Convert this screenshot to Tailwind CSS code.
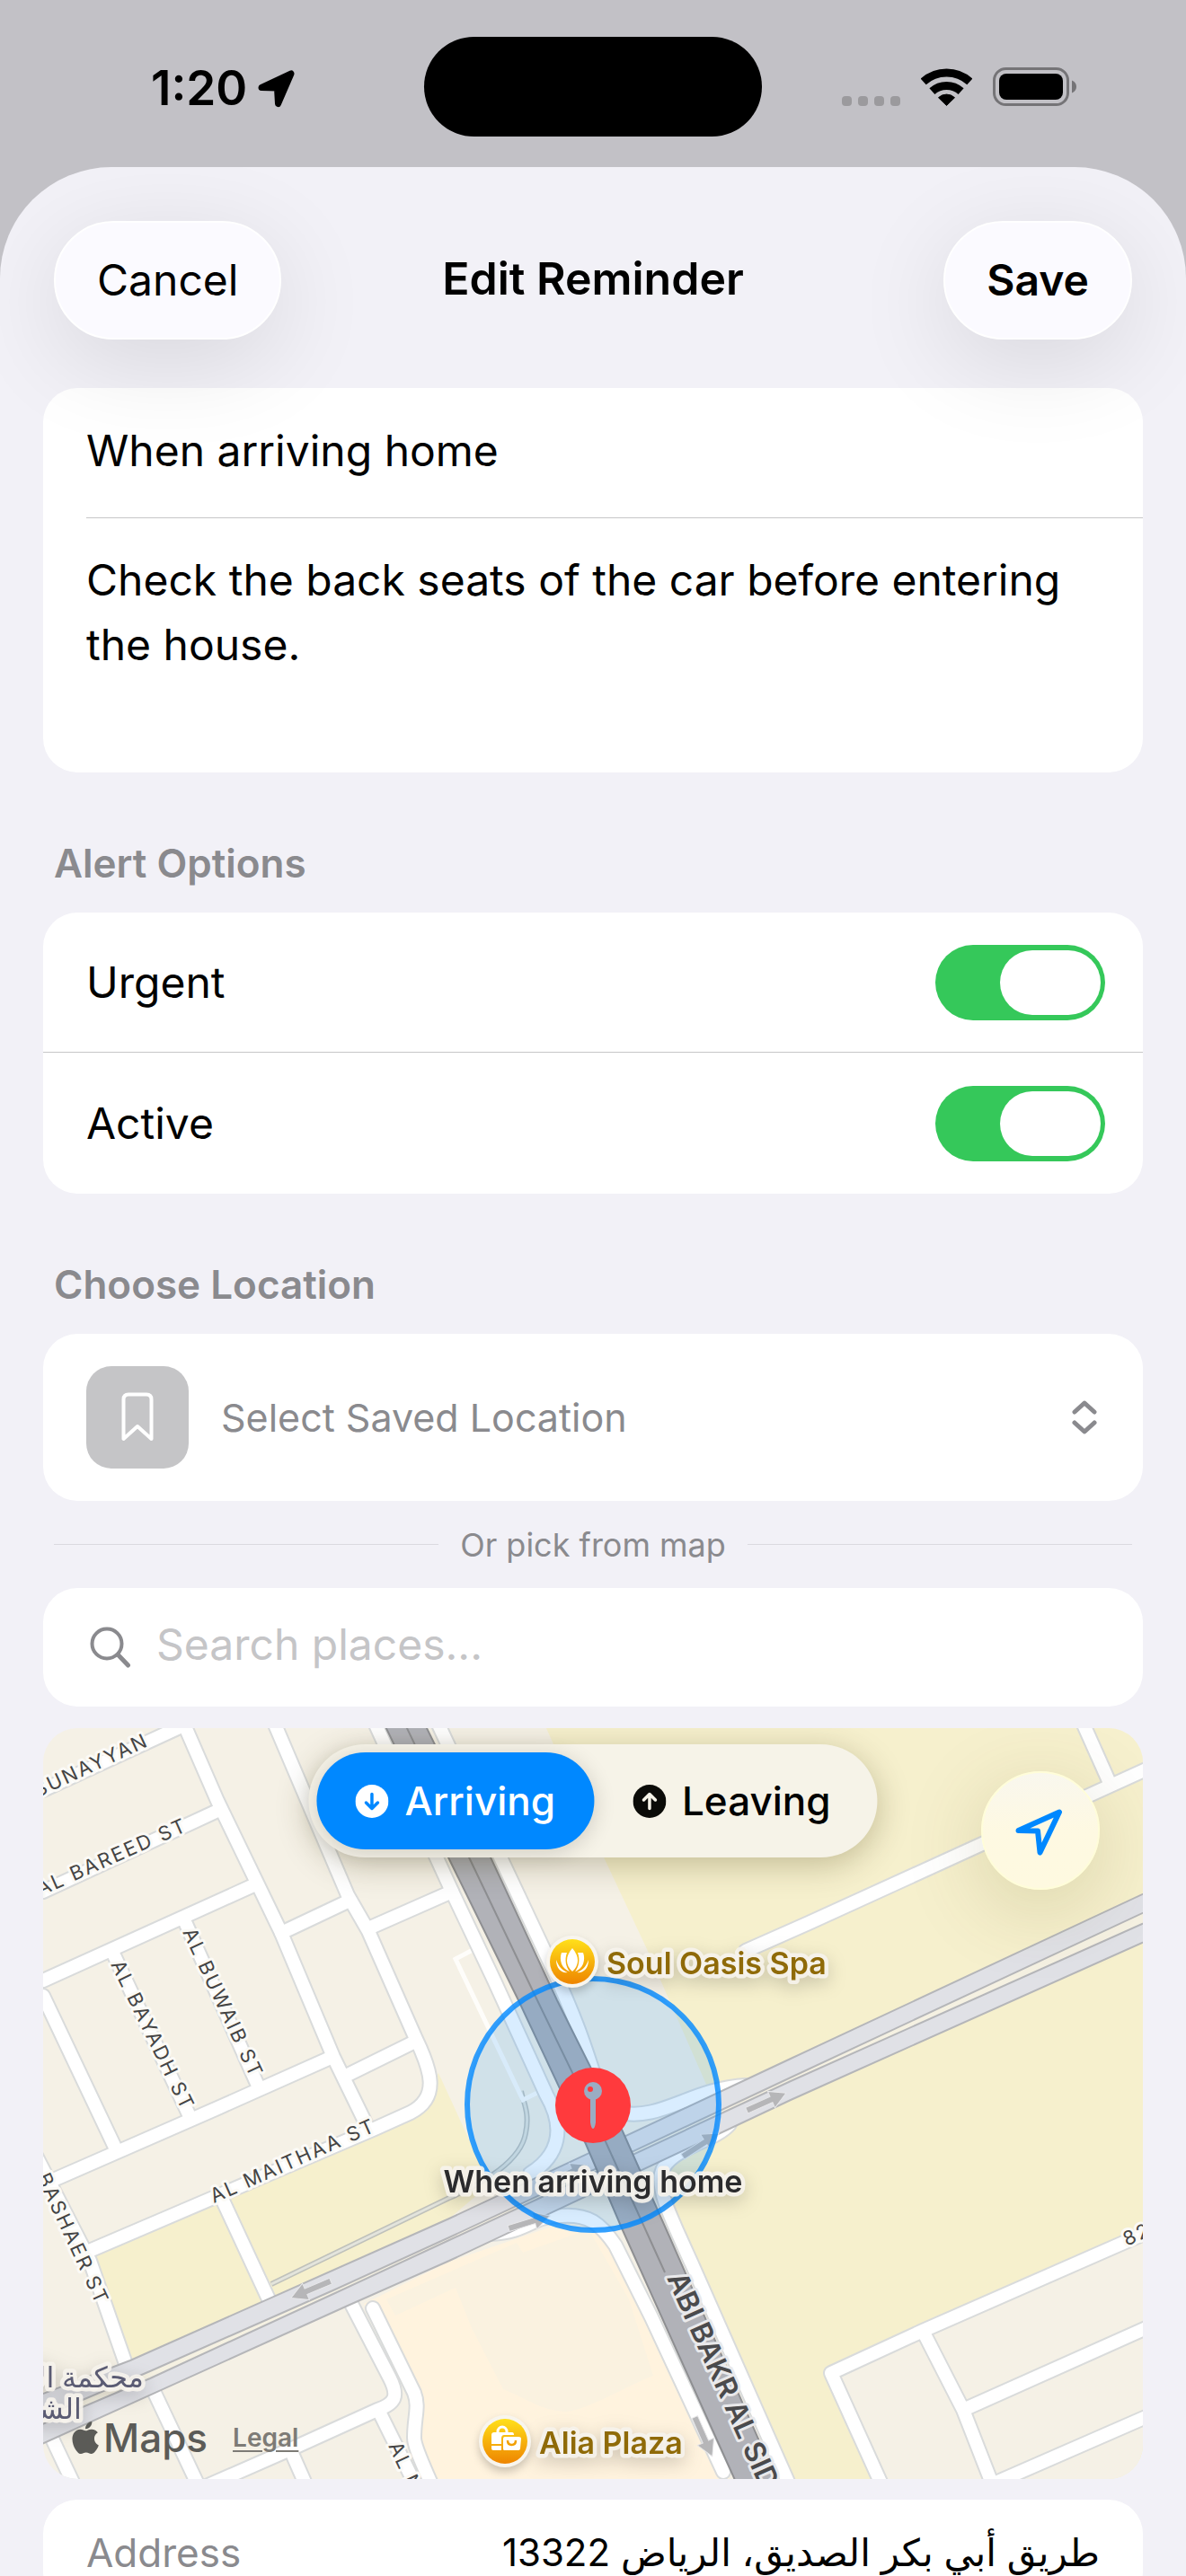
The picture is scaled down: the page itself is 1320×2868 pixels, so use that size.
<!DOCTYPE html>
<html lang="en">
<head>
<meta charset="utf-8">
<meta name="viewport" content="width=device-width, initial-scale=1">
<title>Edit Reminder</title>
<script src="https://cdn.jsdelivr.net/npm/@tailwindcss/browser@4"></script>
</head>
<body class="flex h-screen flex-col overflow-hidden bg-[#c2c1c6] font-[Inter,'DejaVu_Sans',sans-serif] text-[48px] text-black">

<!-- Status bar -->
<header class="grid h-[186px] shrink-0 grid-cols-[1fr_376px_1fr] items-center pt-[41px] pb-[34px]">
  <div class="flex items-center gap-3 pt-1 pl-[168px]">
    <span class="text-[53px] leading-none font-semibold">1:20</span>
    <svg class="h-[42px] w-[42px]" viewBox="0 0 42 42" aria-hidden="true"><path d="M4 19.500 L37 4 L22.500 37.500 L21.500 20 Z" fill="#000" stroke="#000" stroke-width="7" stroke-linejoin="round"/></svg>
  </div>
  <div class="h-[111px] rounded-full bg-black"></div>
  <div class="flex items-center justify-end gap-[23px] pr-[122px]">
    <svg class="h-[42px] w-[65px]" viewBox="0 0 65 42" fill="#9b9a9d" aria-hidden="true"><rect y="31" width="11" height="11" rx="4"/><rect x="18" y="31" width="11" height="11" rx="4"/><rect x="36" y="31" width="11" height="11" rx="4"/><rect x="54" y="31" width="11" height="11" rx="4"/></svg>
    <svg class="h-[42px] w-[57px]" viewBox="0 0 57 42" fill="none" stroke="#000" stroke-width="9" aria-hidden="true"><path d="M2.700 14.900A38.500 38.500 0 0 1 54.300 14.900"/><path d="M12.400 25.700A24 24 0 0 1 44.600 25.700"/><path d="M19.500 32.700A13 13 0 0 1 37.500 32.700L28.500 41.500Z" fill="#000" stroke-width="1" stroke-linejoin="round"/></svg>
    <svg class="h-[43px] w-[93px]" viewBox="0 0 93 43" aria-hidden="true"><rect x="1.500" y="1.500" width="82" height="40" rx="13" fill="none" stroke="#757477" stroke-width="3"/><rect x="7" y="7" width="71" height="29" rx="8"/><path d="M88 14.500C91.500 16 93 18.500 93 21.500S91.500 27 88 28.500Z" fill="#757477"/></svg>
  </div>
</header>

<!-- Sheet -->
<div class="relative flex min-h-0 flex-1 flex-col overflow-hidden rounded-t-[124px] bg-[#f2f1f7]">
  <div class="relative z-10 grid shrink-0 grid-cols-[1fr_auto_1fr] items-center px-[60px] pt-[60px] pb-[54px]">
    <button type="button" class="h-[132px] justify-self-start rounded-full border-2 border-white bg-[#fbfaff] px-[46px] leading-none shadow-[0_24px_110px_rgba(0,0,0,0.11)]">Cancel</button>
    <h1 class="pb-1 text-[50px] leading-none font-semibold">Edit Reminder</h1>
    <button type="button" class="h-[132px] justify-self-end rounded-full border-2 border-white bg-[#fbfaff] px-[46px] leading-none font-semibold shadow-[0_24px_110px_rgba(0,0,0,0.11)]">Save</button>
  </div>

  <main class="min-h-0 flex-1 overflow-y-auto px-12 [scrollbar-width:none]">
    <div class="overflow-hidden rounded-[38px] bg-white">
      <input type="text" aria-label="Title" value="When arriving home" class="block h-36 w-full px-12 pb-1.5 outline-none">
      <div class="ml-12 h-px bg-[#c6c6c8]"></div>
      <textarea aria-label="Notes" rows="3" class="block h-[283px] w-full resize-none overflow-hidden py-[33px] pr-10 pl-12 leading-[72px] outline-none">Check the back seats of the car before entering the house.</textarea>
    </div>

    <h2 class="mt-[74px] mb-7 px-3 text-[44px] leading-[54px] font-semibold text-[#8a8a8e]">Alert Options</h2>
    <div class="divide-y divide-[#c6c6c8] rounded-[38px] bg-white">
      <label class="flex h-[156px] items-center justify-between pr-[42px] pl-12">
        <span>Urgent</span>
        <input type="checkbox" role="switch" checked class="relative h-[84px] w-[189px] appearance-none rounded-full bg-[#c6c6c8] before:absolute before:top-1.5 before:left-1.5 before:h-[72px] before:w-[112px] before:rounded-full before:bg-white checked:bg-[#35c85a] checked:before:left-[72px]">
      </label>
      <label class="flex h-[157px] items-center justify-between pr-[42px] pl-12">
        <span>Active</span>
        <input type="checkbox" role="switch" checked class="relative h-[84px] w-[189px] appearance-none rounded-full bg-[#c6c6c8] before:absolute before:top-1.5 before:left-1.5 before:h-[72px] before:w-[112px] before:rounded-full before:bg-white checked:bg-[#35c85a] checked:before:left-[72px]">
      </label>
    </div>

    <h2 class="mt-[74px] mb-7 px-3 text-[44px] leading-[54px] font-semibold text-[#8a8a8e]">Choose Location</h2>
    <label class="flex h-[186px] items-center gap-9 rounded-[38px] bg-white pr-[51px] pl-12">
      <span class="flex h-[114px] w-[114px] shrink-0 items-center justify-center rounded-[28px] bg-[#c5c5c7]">
        <svg class="h-[56px] w-[36px]" viewBox="0 0 36 56" fill="none" stroke="#fff" stroke-width="4" stroke-linejoin="round" aria-hidden="true"><path d="M2.500 52V8Q2.500 2.500 8 2.500H28Q33.500 2.500 33.500 8V52L18 38Z"/></svg>
      </span>
      <select aria-label="Saved location" class="min-w-0 flex-1 appearance-none text-[43px] text-[#8a8a8e] outline-none"><option>Select Saved Location</option></select>
      <svg class="h-[38px] w-[28px] shrink-0" viewBox="0 0 28 38" fill="none" stroke="#8a8a8e" stroke-width="5" stroke-linecap="round" stroke-linejoin="round" aria-hidden="true"><path d="M3 13L14 3L25 13M3 25L14 35L25 25"/></svg>
    </label>

    <div class="flex h-[97px] items-center gap-6 px-3 text-[36px] text-[#8a8a8e]">
      <span class="h-px flex-1 bg-[#dadadf]"></span>
      <span>Or pick from map</span>
      <span class="h-px flex-1 bg-[#dadadf]"></span>
    </div>

    <label class="flex h-[132px] items-center gap-7 rounded-[38px] bg-white px-[52px]">
      <svg class="h-[46px] w-[46px] shrink-0" viewBox="0 0 46 46" fill="none" stroke="#8a8a8e" stroke-width="4" stroke-linecap="round" aria-hidden="true"><circle cx="19" cy="19" r="16.500"/><path d="M31.500 31.500L42.500 43" stroke-width="5"/></svg>
      <input type="search" aria-label="Search places" placeholder="Search places..." class="min-w-0 flex-1 pb-1.5 outline-none placeholder:text-[#c5c5c7]">
    </label>

    <!-- Map -->
    <section aria-label="Map" class="relative mt-6 h-[836px] overflow-hidden rounded-[38px] bg-[#f5f1e6]">
      <svg class="block h-full w-full" viewBox="48 1924 1224 836" preserveAspectRatio="xMidYMid slice" role="img" aria-label="Street map of the reminder area">
        <defs>
          <linearGradient id="poi" x1="0" y1="0" x2="0" y2="1"><stop offset="0" stop-color="#ffe01a"/><stop offset="1" stop-color="#ee8500"/></linearGradient>
          <path id="arrow" d="M-24 -3.500H6V-10L24 0L6 10V3.500H-24Z"/>
          <g id="streets">
            <path d="M48 1993L200 1923M48 2106L240 2017M48 2205L280 2100M127 2177L210 2354M207 2142L287 2322M370 2290L240 2348L48 2432"/>
            <path d="M205 1920L242 2005L313 2152L371 2290L409 2368M306 1920L387 2110L410 2150L462 2268C480 2305 490 2335 457 2352L417 2370L90 2510"/>
            <path d="M313 2152L387 2117M410 2147L503 2106M387 2310L462 2273M48 2222L130 2395M40 2400L100 2517L140 2632M248 2450L300 2562"/>
            <path d="M172 2664L222 2770M58 2715L84 2770M390 2563L434 2648C444 2668 440 2676 420 2683L323 2727L225 2770M323 2727L342 2770M423 2687L464 2770"/>
            <path d="M415 2570L461 2664C467 2680 461 2690 461 2714C461 2724 470 2742 482 2770"/>
            <path d="M418 1920L505 2110L550 2205L608 2332C630 2370 622 2400 590 2420"/>
            <path d="M488 1920L558 2070L613 2187C640 2245 650 2275 666 2325"/>
            <path d="M830 2172L900 2141L1093 2053L1280 1968M1206 1920L1235 1985"/>
            <path d="M1280 2484L1027 2595L925 2642L983 2770M1027 2595L1072 2683L1106 2770M1072 2683L1280 2590M1090 2772L1280 2689"/>
            <path d="M545 2487C590 2485 590 2467 625 2467C655 2465 668 2475 685 2500L725 2580L805 2752"/>
            <path d="M812 2365C795 2385 742 2392 736 2420C732 2440 745 2465 772 2525L880 2770"/>
            <path d="M690 2352C735 2362 770 2325 830 2322"/>
          </g>
        </defs>
        <path fill="#f6f0cd" d="M608 1924L673 2070L720 2170L787 2323L737 2440L882 2760H1272V1924Z"/>
        <path fill="#f6f0cd" d="M488 2308L545 2432L500 2470L145 2628L95 2510L417 2368L470 2345Z"/>
        <path fill="#f5f1e6" d="M925 2642L1272 2487V2760H978Z"/>
        <path fill="#fff3de" d="M405 2565L500 2518L640 2470L690 2500L812 2760H470L461 2680Z"/>
        <path fill="#faf2e0" d="M507 2547L525 2592L560 2660C590 2672 600 2683 630 2685C655 2683 700 2655 727 2645L700 2560L655 2482L582 2508L575 2497L430 2560L440 2578Z"/>
        <path d="M302 2543L500 2447C540 2430 580 2405 585 2375C590 2352 582 2340 580 2328" fill="none" stroke="#bfc1bb" stroke-width="6"/>
        <path d="M302 2543L500 2447C540 2430 580 2405 585 2375C590 2352 582 2340 580 2328" fill="none" stroke="#e3e4dc" stroke-width="3"/>
        <path d="M526 2171L507 2181L582 2338L602 2328" fill="none" stroke="#fefdfa" stroke-width="5"/>
        <use href="#streets" fill="none" stroke="#d9dbdb" stroke-width="18" stroke-linejoin="round" stroke-linecap="round"/>
        <use href="#streets" fill="none" stroke="#fff" stroke-width="14" stroke-linejoin="round" stroke-linecap="round"/>
        <!-- East-west dual carriageway -->
        <path fill="#f5f1e2" d="M48 2665L145 2628L500 2470L880 2292L1272 2109V2162L880 2338L500 2517L387 2567L48 2720Z"/>
        <g fill="#e0e1e6" stroke="#b5b6b9" stroke-width="2">
          <path d="M40 2668L145 2628L500 2470L880 2292L1280 2105V2126L880 2313L500 2491L373 2549L167 2640L40 2694Z"/>
          <path d="M40 2724L387 2567L500 2517L880 2338L1280 2159V2138L880 2317L500 2494L373 2553L167 2648L40 2702Z"/>
        </g>
        <!-- North-south motorway -->
        <path fill="#b1b2b8" stroke="#8e8f92" stroke-width="2" d="M426 1916L500 2070L577 2227L652 2387L693 2483L822 2770H868L745 2490L693 2373L620 2227L547 2070L471 1916Z"/>
        <path fill="none" stroke="#8e8f92" stroke-width="2" d="M451 1920L523 2070L598 2227L672 2380L740 2530"/>
        <g fill="#b6b6b8" stroke="#e8e8ea" stroke-width="1">
          <use href="#arrow" transform="translate(346 2549) rotate(157)"/>
          <use href="#arrow" transform="translate(589 2474) rotate(-17)"/>
          <use href="#arrow" transform="translate(632 2420) rotate(-24)"/>
          <use href="#arrow" transform="translate(780 2388) rotate(-33)"/>
          <use href="#arrow" transform="translate(853 2340) rotate(-24)"/>
          <use href="#arrow" transform="translate(783 2713) rotate(66)"/>
        </g>
        <!-- Geofence -->
        <circle cx="660" cy="2343" r="140" fill="#0088ff" fill-opacity=".15" stroke="#0088ff" stroke-opacity=".8" stroke-width="6"/>
        <circle cx="660" cy="2344" r="42" fill="#ff3a3d"/>
        <path fill="#9aacc3" d="M657 2335H663V2363Q662 2370 660 2370Q658 2370 657 2363Z"/><circle cx="660" cy="2328" r="10" fill="#9aacc3"/><circle cx="657" cy="2326" r="3" fill="#ff3a3d"/>
        <!-- Street names -->
        <g class="tracking-widest" font-size="22" fill="#444" stroke="#fbfaf6" stroke-width="6" stroke-linejoin="round" paint-order="stroke">
          <text transform="translate(167 1943) rotate(-25)" text-anchor="end">SUNAYYAN</text>
          <text transform="translate(45 2111) rotate(-24)">AL BAREED ST</text>
          <text transform="translate(123 2187) rotate(64)">AL BAYADH ST</text>
          <text transform="translate(203 2151) rotate(65)">AL BUWAIB ST</text>
          <text transform="translate(238 2453) rotate(-24)">AL MAITHAA ST</text>
          <text transform="translate(108 2568) rotate(65)" text-anchor="end">BASHAER ST</text>
          <text transform="translate(432 2723) rotate(65)">AL NADA ST</text>
          <text transform="translate(1254 2501) rotate(-24)">82</text>
        </g>
        <text transform="translate(742 2536) rotate(66)" font-size="32" font-weight="600" fill="#4a4a4c" stroke="#e9e9eb" stroke-width="6" stroke-linejoin="round" paint-order="stroke">ABI BAKR AL SIDDIQ</text>
        <!-- Places -->
        <g font-size="34" font-weight="600" stroke="#f6f3ec" stroke-opacity=".9" stroke-width="9" stroke-linejoin="round" paint-order="stroke" class="drop-shadow-[0_6px_10px_rgba(0,0,0,0.18)]">
          <text x="675" y="2198" fill="#8f6a08">Soul Oasis Spa</text>
          <text x="600" y="2732" fill="#8f6a08">Alia Plaza</text>
          <text x="660" y="2441" text-anchor="middle" fill="#2b2b2d">When arriving home</text>
          <g direction="rtl" font-weight="500" font-size="32" fill="#5a5b73">
            <text x="160" y="2658">محكمة الأحوال</text>
            <text x="91" y="2693">الشخصية</text>
          </g>
        </g>
        <g transform="translate(637 2184)">
          <circle r="29" fill="#f8f5ee" class="drop-shadow-[0_5px_5px_rgba(0,0,0,0.2)]"/><circle r="25" fill="url(#poi)"/>
          <g fill="#fff"><path d="M0 -15C8 -6 8 4 0 11C-8 4 -8 -6 0 -15Z"/><path d="M-6 -10C-9 -2 -7 6 -3 11C-12 8 -15 -2 -12 -10Z"/><path d="M6 -10C9 -2 7 6 3 11C12 8 15 -2 12 -10Z"/><path d="M-18 -2C-15 6 -11 10 -5 12C-12 13 -18 8 -18 -2Z"/><path d="M18 -2C15 6 11 10 5 12C12 13 18 8 18 -2Z"/></g>
        </g>
        <g transform="translate(562 2718)">
          <circle r="29" fill="#f8f5ee" class="drop-shadow-[0_5px_5px_rgba(0,0,0,0.2)]"/><circle r="25" fill="url(#poi)"/>
          <path d="M-8 -9V-11A5 5 0 0 1 2 -11V-9" fill="none" stroke="#fff" stroke-width="3"/>
          <path fill="#fff" d="M-12 -10H8Q10 -10 10 -7H-1Q-4 -7 -4 -3V3H-15V-7Q-15 -10 -12 -10ZM-15 5H-4V10H-13Q-15 10 -15 8ZM0 -5H15Q18 -5 18 -3L17 8Q17 10 14 10H-1Q-2 10 -2 8V-3Q-2 -5 0 -5Z"/>
          <path d="M3 -1Q3 4 7.500 4T12 -1" fill="none" stroke="#f2a000" stroke-width="2.500"/>
        </g>
      </svg>

      <div role="radiogroup" aria-label="Trigger" class="absolute top-[18px] left-1/2 flex -translate-x-1/2 rounded-full bg-[#f6f3e8] p-[9px] text-[44px] leading-none font-medium whitespace-nowrap shadow-[0_8px_36px_rgba(60,50,0,0.28)]">
        <label class="flex h-[108px] items-center gap-[18px] rounded-full px-[43px] has-checked:bg-[#0088ff] has-checked:text-white has-checked:shadow-[0_4px_24px_rgba(0,0,0,0.16)]">
          <input type="radio" name="trigger" checked class="sr-only">
          <svg class="h-[37px] w-[37px]" viewBox="0 0 37 37" aria-hidden="true"><circle cx="18.500" cy="18.500" r="18.500" fill="#fff"/><path d="M18.500 10.500V26M12 20L18.500 26.500L25 20" fill="none" stroke="#0088ff" stroke-width="3.500" stroke-linecap="round" stroke-linejoin="round"/></svg>
          <span>Arriving</span>
        </label>
        <label class="flex h-[108px] items-center gap-[18px] rounded-full px-[43px] has-checked:bg-[#0088ff] has-checked:text-white">
          <input type="radio" name="trigger" class="sr-only">
          <svg class="h-[37px] w-[37px]" viewBox="0 0 37 37" aria-hidden="true"><circle cx="18.500" cy="18.500" r="18.500" fill="#0b0b08"/><path d="M18.500 26.500V11M12 17L18.500 10.500L25 17" fill="none" stroke="#f6f3e8" stroke-width="3.500" stroke-linecap="round" stroke-linejoin="round"/></svg>
          <span>Leaving</span>
        </label>
      </div>

      <button type="button" aria-label="Show my location" class="absolute top-12 right-12 flex h-[132px] w-[132px] items-center justify-center rounded-full border-2 border-[#fffdd9] bg-linear-to-b from-[#f9f7ee] via-[#fef9e2] to-[#fef9e0] shadow-[0_20px_90px_rgba(90,80,0,0.18)]">
        <svg class="h-[56px] w-[56px]" viewBox="0 0 56 56" fill="none" stroke="#0088ff" stroke-width="6" stroke-linejoin="round" aria-hidden="true"><path d="M3.500 28L49 7.500L27.500 52.500L25 28.500Z"/></svg>
      </button>

      <div class="absolute bottom-6 left-8 flex items-center gap-7">
        <span class="flex items-center gap-1 text-[44px] leading-none font-medium text-[#5b5b57]">
          <svg class="h-[36px] w-[31px]" viewBox="2 0 20.500 24" fill="#5b5b57" aria-hidden="true"><path d="M12.152 6.896c-.948 0-2.415-1.078-3.960-1.040-2.040.027-3.910 1.183-4.961 3.014-2.117 3.675-.546 9.103 1.519 12.090 1.013 1.454 2.208 3.090 3.792 3.039 1.520-.065 2.090-.987 3.935-.987 1.831 0 2.350.987 3.960.948 1.637-.026 2.676-1.480 3.676-2.948 1.156-1.688 1.636-3.325 1.662-3.415-.039-.013-3.182-1.221-3.220-4.857-.026-3.040 2.480-4.494 2.597-4.559-1.429-2.090-3.623-2.324-4.390-2.376-2-.156-3.675 1.090-4.610 1.090zM15.530 3.830c.843-1.012 1.400-2.427 1.245-3.830-1.207.052-2.662.805-3.532 1.818-.780.896-1.454 2.338-1.273 3.714 1.338.104 2.715-.688 3.559-1.701"/></svg>Maps</span>
        <a href="#legal" class="text-[28px] leading-none font-semibold text-[#7d7b76] underline decoration-2 underline-offset-4">Legal</a>
      </div>
    </section>

    <dl class="mt-[23px] flex justify-between rounded-[38px] bg-white px-12 py-8 text-[44px] leading-[54px]">
      <dt class="text-[#8a8a8e]">Address</dt>
      <dd dir="rtl" lang="ar" class="text-[42px]">طريق أبي بكر الصديق، الرياض 13322</dd>
    </dl>
  </main>
</div>
</body>
</html>
